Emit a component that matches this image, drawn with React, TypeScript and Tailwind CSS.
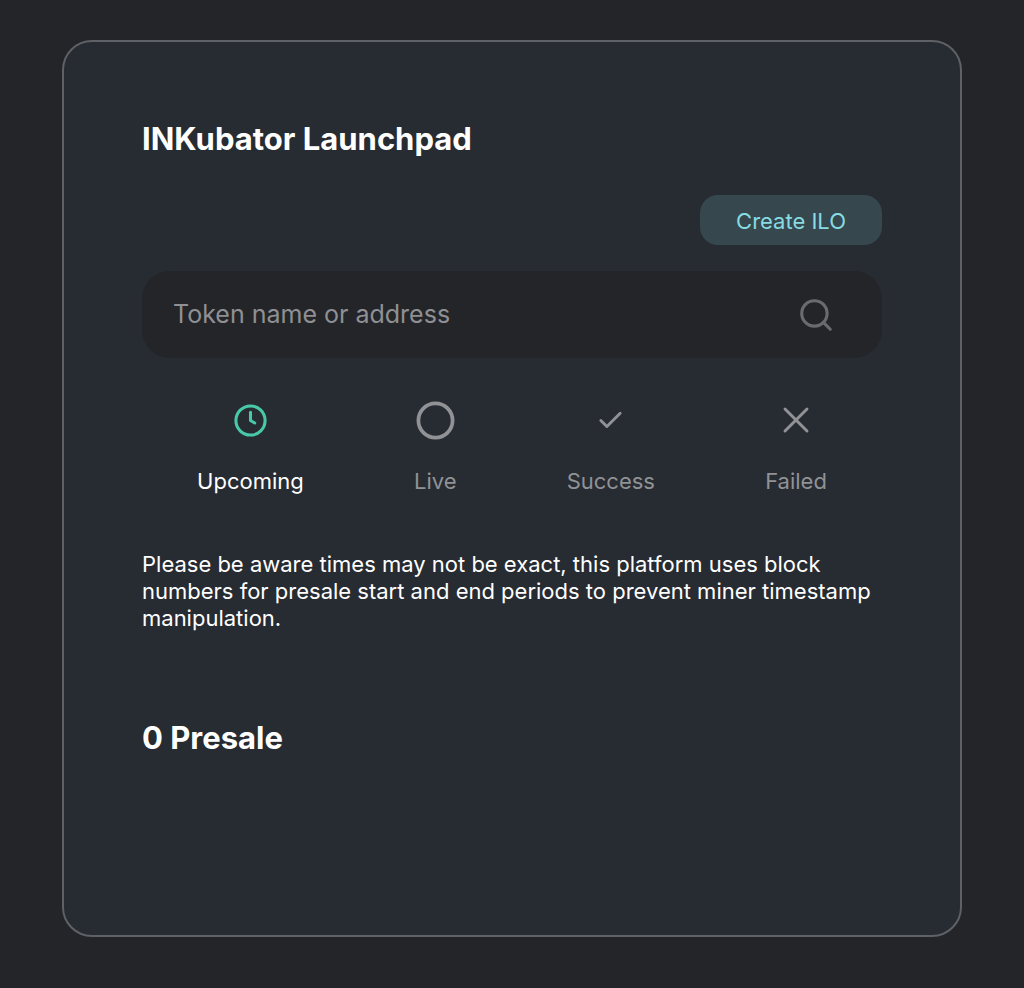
import { Check, Circle, Search, X } from "lucide-react"

type IconProps = { size: number; strokeWidth: number; className: string }

function ClockIcon({ size, strokeWidth, className }: IconProps) {
    return (
        <svg
            width={size}
            height={size}
            viewBox="0 0 24 24"
            fill="none"
            stroke="currentColor"
            strokeWidth={strokeWidth}
            strokeLinecap="round"
            strokeLinejoin="round"
            className={className}
        >
            <circle cx="12" cy="12" r="10" />
            <path d="M12 6.4V12l2.9 1.7" />
        </svg>
    )
}

const tabs = [
    { icon: ClockIcon, label: "Upcoming", size: 35, stroke: 2.1, active: true },
    { icon: Circle, label: "Live", size: 41, stroke: 2.2, active: false },
    { icon: Check, label: "Success", size: 29, stroke: 2.4, active: false },
    { icon: X, label: "Failed", size: 44, stroke: 1.6, active: false },
]

function SearchBar() {
    return (
        <label className="mt-[26px] flex h-[87px] items-center rounded-[28px] bg-[#242529] pr-[47px] pl-[31px]">
            <input
                type="text"
                aria-label="Token name or address"
                placeholder="Token name or address"
                className="min-w-0 flex-1 bg-transparent text-[25px] text-[#8f9093] outline-none placeholder:text-[#8f9093]"
            />
            <Search className="shrink-0 text-[#6a6b6e]" size={38} strokeWidth={2} />
        </label>
    )
}

function StatusTabs() {
    return (
        <div className="mt-8 flex justify-around">
            {tabs.map((tab) => (
                <button
                    key={tab.label}
                    type="button"
                    className={tab.active ? "flex flex-col items-center text-white" : "flex flex-col items-center text-[#909295]"}
                >
                    <span className="flex h-[60px] items-center justify-center">
                        <tab.icon
                            size={tab.size}
                            strokeWidth={tab.stroke}
                            className={tab.active ? "text-[#48c9a9]" : "text-[#909295]"}
                        />
                    </span>
                    <span className="mt-[15px] text-[22px] leading-8">{tab.label}</span>
                </button>
            ))}
        </div>
    )
}

export default function App() {
    return (
        <div className="min-h-screen bg-[#242529] px-[62px] py-10 font-['Inter',sans-serif] text-white">
            <main className="min-h-[897px] rounded-[30px] border-2 border-[#5e6165] bg-[#272b32] px-[78px] pt-[77px] pb-20">
                <h1 className="text-[31px] leading-10 font-bold">INKubator Launchpad</h1>
                <div className="mt-9 flex justify-end">
                    <button type="button" className="h-[50px] rounded-[18px] bg-[#36474d] px-9 pt-0.5 text-[22px] text-[#86dce2]">
                        Create ILO
                    </button>
                </div>
                <SearchBar />
                <StatusTabs />
                <p className="mt-[54px] text-[22px] leading-[27px]">
                    Please be aware times may not be exact, this platform uses block numbers for presale start and end
                    periods to prevent miner timestamp manipulation.
                </p>
                <h2 className="mt-[86px] text-[31px] leading-10 font-bold">0 Presale</h2>
            </main>
        </div>
    )
}
